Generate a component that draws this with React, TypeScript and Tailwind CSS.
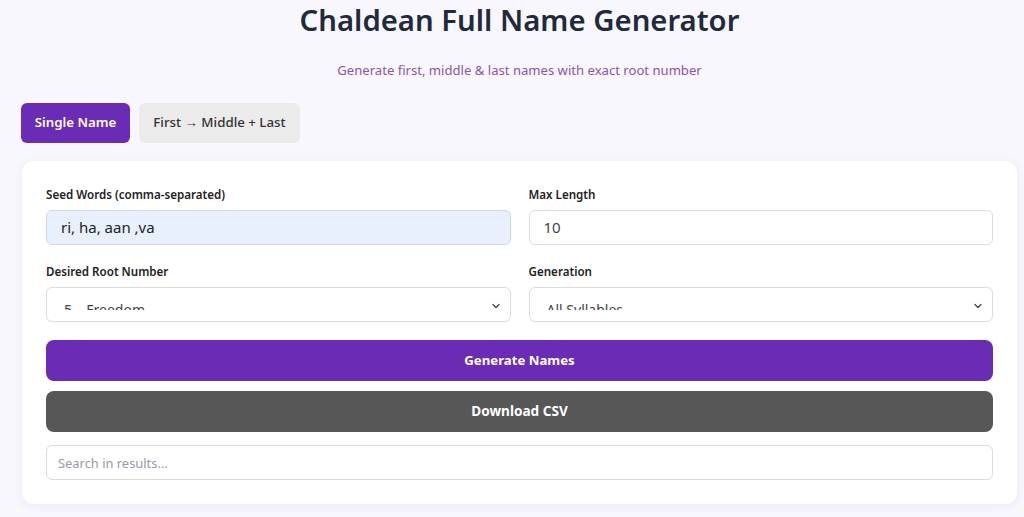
import { ChevronDown } from "lucide-react";

const FakeSelect = ({ value }: { value: string }) => (
  <div className="relative h-[35px] rounded-md border border-[#dcdcdc] bg-white">
    <div className="h-[22px] overflow-hidden pl-[17px] pt-[12px] text-[14px] leading-5 text-[#444]">
      {value}
    </div>
    <ChevronDown className="absolute right-[8px] top-[12px] h-3 w-3 text-[#444]" strokeWidth={2.5} />
  </div>
);

const labelCls = "mb-1.5 block text-[11.6px] font-semibold leading-[18px] text-[#222]";

const App = () => {
  return (
    <div className="min-h-screen bg-[#f8f7fe] font-['Noto_Sans',sans-serif]">
      <div className="ml-[22px] w-[995px]">
        {/* Header */}
        <h1 className="pt-[1px] text-center text-[29.3px] font-semibold leading-[38px] text-[#1f2a3c]">
          Chaldean Full Name Generator
        </h1>
        <p className="mt-[21px] text-center text-[13.1px] leading-5 text-[#8b55ad]">
          Generate first, middle &amp; last names with exact root number
        </p>

        {/* Tabs */}
        <div className="ml-[-1px] mt-[23px] flex gap-[9px]">
          <button className="h-10 w-[109px] rounded-md bg-[#6a2bb5] text-[13.3px] font-semibold text-white">
            Single Name
          </button>
          <button className="h-10 w-[161px] rounded-md bg-[#ebebeb] text-[13.3px] font-medium text-[#333]">
            First → Middle + Last
          </button>
        </div>

        {/* Card */}
        <div className="mt-[18px] rounded-xl bg-white px-6 pb-6 pt-[25px] shadow-[0_2px_10px_rgba(90,80,160,0.08)]">
          <div className="grid grid-cols-2 gap-x-[18px] gap-y-[18px]">
            <div>
              <label className={labelCls}>Seed Words (comma-separated)</label>
              <div className="flex h-[35px] items-center rounded-md border border-[#cfd9e8] bg-[#e8f0fe] pl-[14px] text-[15px] text-[#222]">
                ri, ha, aan ,va
              </div>
            </div>
            <div>
              <label className={labelCls}>Max Length</label>
              <div className="flex h-[35px] items-center rounded-md border border-[#dcdcdc] bg-white pl-[14px] text-[15px] text-[#444]">
                10
              </div>
            </div>
            <div>
              <label className={labelCls}>Desired Root Number</label>
              <FakeSelect value="5 – Freedom" />
            </div>
            <div>
              <label className={labelCls}>Generation</label>
              <FakeSelect value="All Syllables" />
            </div>
          </div>

          <button className="mt-[18px] h-[41px] w-full rounded-lg bg-[#6a2bb5] text-[13.2px] font-bold text-white">
            Generate Names
          </button>
          <button className="mt-[10px] h-[41px] w-full rounded-lg bg-[#575757] text-[13.6px] font-bold text-white">
            Download CSV
          </button>
          <input
            className="mt-[13px] h-[35px] w-full rounded-md border border-[#dcdcdc] px-[11px] text-[12.9px] outline-none placeholder:text-[#9a9aa6]"
            placeholder="Search in results..."
          />
        </div>
      </div>
    </div>
  );
};

export default App;
